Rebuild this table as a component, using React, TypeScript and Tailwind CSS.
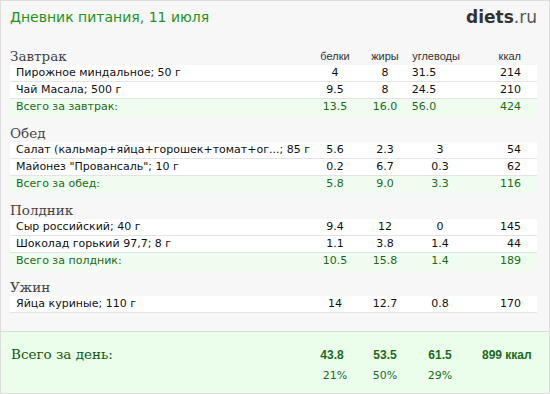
import React from "react";

type Row = {
  name: string;
  b: string;
  f: string;
  c: string;
  k: string;
};

type Meal = {
  title: string;
  rows: Row[];
  total?: Row;
  shiftCarbs?: boolean;
};

const meals: Meal[] = [
  {
    title: "Завтрак",
    shiftCarbs: true,
    rows: [
      { name: "Пирожное миндальное; 50 г", b: "4", f: "8", c: "31.5", k: "214" },
      { name: "Чай Масала; 500 г", b: "9.5", f: "8", c: "24.5", k: "210" },
    ],
    total: { name: "Всего за завтрак:", b: "13.5", f: "16.0", c: "56.0", k: "424" },
  },
  {
    title: "Обед",
    rows: [
      { name: "Салат (кальмар+яйца+горошек+томат+ог...; 85 г", b: "5.6", f: "2.3", c: "3", k: "54" },
      { name: "Майонез \"Провансаль\"; 10 г", b: "0.2", f: "6.7", c: "0.3", k: "62" },
    ],
    total: { name: "Всего за обед:", b: "5.8", f: "9.0", c: "3.3", k: "116" },
  },
  {
    title: "Полдник",
    rows: [
      { name: "Сыр российский; 40 г", b: "9.4", f: "12", c: "0", k: "145" },
      { name: "Шоколад горький 97,7; 8 г", b: "1.1", f: "3.8", c: "1.4", k: "44" },
    ],
    total: { name: "Всего за полдник:", b: "10.5", f: "15.8", c: "1.4", k: "189" },
  },
  {
    title: "Ужин",
    rows: [{ name: "Яйца куриные; 110 г", b: "14", f: "12.7", c: "0.8", k: "170" }],
  },
];

const grid = "grid grid-cols-[1fr_50px_50px_60px_67px]";
const sans = "font-['DejaVu_Sans',sans-serif]";
const serif = "font-['DejaVu_Serif',serif]";
const head = "pb-[2px] text-[11px] leading-[14px] text-[#333] font-['Liberation_Sans',sans-serif]";
const bold = "text-[12px] font-bold text-[#1b6b1b] font-['Liberation_Sans',sans-serif]";

const TableRow = ({ row, total, shift }: { row: Row; total?: boolean; shift?: boolean }) => {
  return (
    <div
      className={`${grid} h-[17px] text-[11px] leading-[16px] ${sans} ${
        total ? "bg-[#f0fcf0] text-[#1b6b1b]" : "bg-white text-[#111] border-b border-[#e4e4e4]"
      }`}
    >
      <span className="pl-[6px] whitespace-nowrap">{row.name}</span>
      <span className="text-center">{row.b}</span>
      <span className="text-center">{row.f}</span>
      <span className={`text-center ${shift ? "pr-[32px]" : ""}`}>{row.c}</span>
      <span className="text-right pr-[16px]">{row.k}</span>
    </div>
  );
};

const App = () => {
  return (
    <div className="w-[550px] h-[394px] flex flex-col border border-[#dcdcdc] bg-[#f7f7f7] overflow-hidden">
      <div className="h-[38px] flex justify-between items-start pl-[9px] pr-[12px] pt-[6px]">
        <span className={`pt-[1px] text-[14px] leading-[18px] text-[#239323] ${sans}`}>
          Дневник питания, 11 июля
        </span>
        <span className={`text-[17px] leading-[20px] text-[#333] ${sans}`}>
          <b className="font-bold">diets</b>
          <span className="text-[#555]">.ru</span>
        </span>
      </div>

      <div className="pl-[9px] pr-[12px]">
        {meals.map((meal, i) => (
          <div key={meal.title}>
            <div className={`${grid} h-[26px] items-end`}>
              <span className={`text-[13.5px] leading-[18px] text-[#444] ${serif}`}>{meal.title}</span>
              {i === 0 && (
                <>
                  <span className={`text-center ${head}`}>белки</span>
                  <span className={`text-center ${head}`}>жиры</span>
                  <span className={`text-center pr-[8px] ${head}`}>углеводы</span>
                  <span className={`text-right pr-[16px] ${head}`}>ккал</span>
                </>
              )}
            </div>
            {meal.rows.map((r) => (
              <TableRow key={r.name} row={r} shift={meal.shiftCarbs} />
            ))}
            {meal.total && <TableRow row={meal.total} total shift={meal.shiftCarbs} />}
          </div>
        ))}
      </div>

      <div className="mt-[18px] flex-1 border-t border-[#dcdcdc] bg-[#ebfdeb] pl-[9px] pr-[12px] pt-[13px]">
        <div className={`${grid} items-baseline`}>
          <span className={`pl-[1px] text-[13.5px] leading-[18px] text-[#0d5c0d] ${serif}`}>Всего за день:</span>
          <span className={`text-center pr-[6px] ${bold}`}>43.8</span>
          <span className={`text-center ${bold}`}>53.5</span>
          <span className={`text-center ${bold}`}>61.5</span>
          <span className={`pl-[12px] whitespace-nowrap ${bold}`}>899 ккал</span>
        </div>
        <div className={`${grid} mt-[5px] text-[11px] leading-[14px] text-[#1b6b1b] ${sans}`}>
          <span></span>
          <span className="text-center">21%</span>
          <span className="text-center">50%</span>
          <span className="text-center">29%</span>
          <span></span>
        </div>
      </div>
    </div>
  );
};

export default App;
